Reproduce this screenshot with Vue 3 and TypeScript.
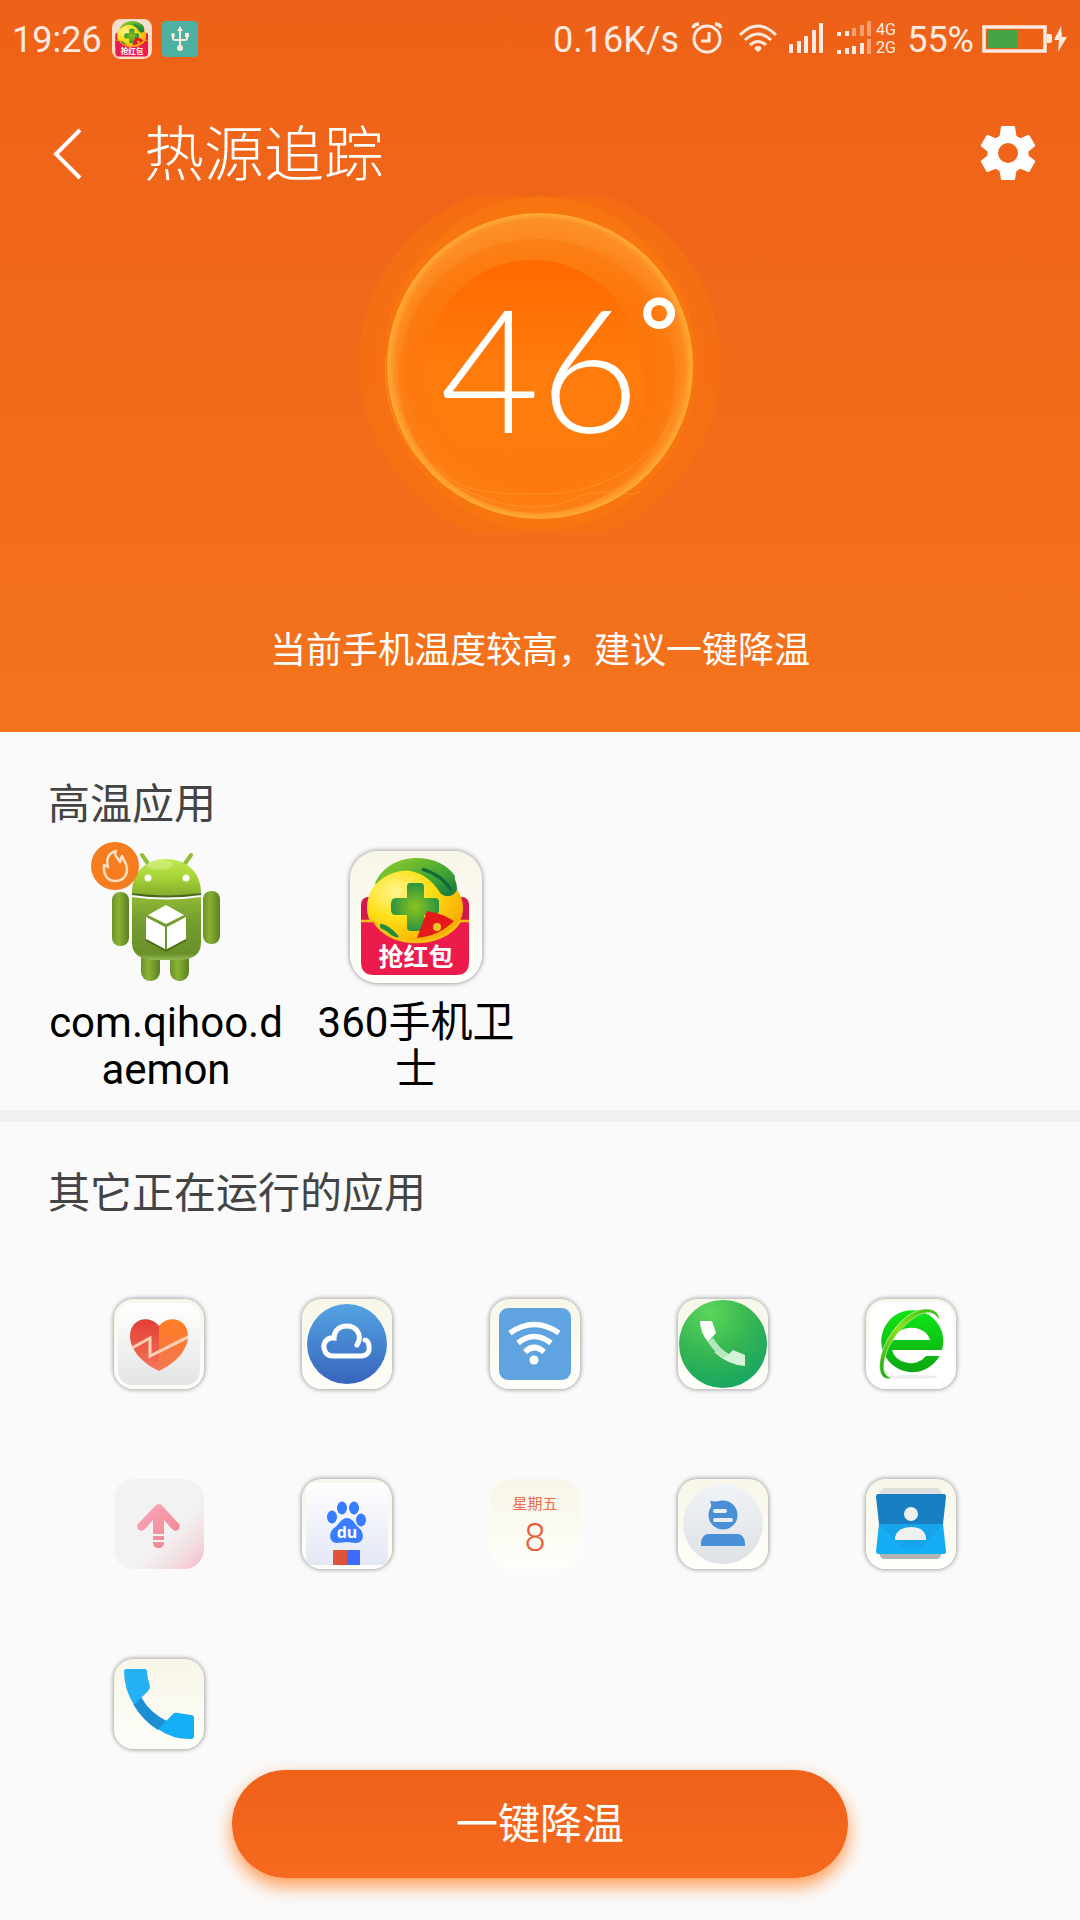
<script setup lang="ts">
import { ref } from 'vue'

interface HotApp {
  id: string
  name: string
  burning: boolean
}

interface SignalBar {
  x: number
  top: number
  dim?: boolean
}

const temperature = ref(46)

const hotApps: HotApp[] = [
  { id: 'android', name: 'com.qihoo.daemon', burning: true },
  { id: 'guard', name: '360手机卫士', burning: false },
]

const runningApps: string[] = [
  'health',
  'cloud',
  'wifi',
  'dialer',
  'browser',
  'boost',
  'baidu',
  'calendar',
  'messaging',
  'contacts',
  'phone',
]

const flatApps = ['boost', 'calendar']

const mainSignal: SignalBar[] = [
  { x: 4, top: 27 },
  { x: 12, top: 24 },
  { x: 19, top: 19 },
  { x: 27, top: 13 },
  { x: 34, top: 6 },
]

const upperSignal: SignalBar[] = [
  { x: 5, top: 15 },
  { x: 13, top: 14 },
  { x: 20, top: 11, dim: true },
  { x: 28, top: 8, dim: true },
  { x: 35, top: 4, dim: true },
]

const lowerSignal: SignalBar[] = [
  { x: 5, top: 33 },
  { x: 13, top: 31 },
  { x: 20, top: 29 },
  { x: 28, top: 26 },
  { x: 35, top: 22, dim: true },
]
</script>

<template>
  <div class="page">
    <header class="hero">
      <div class="status">
        <div class="status-side">
          <span class="clock">19:26</span>
          <svg class="mini" width="40" height="40" viewBox="0 0 132 132">
            <rect width="132" height="132" rx="28" fill="#f6ddc9" />
            <use href="#guard-art" />
          </svg>
          <svg width="36" height="36" viewBox="0 0 36 36">
            <rect width="36" height="36" rx="4" fill="#4cb0a3" />
            <g fill="none" stroke="#fbe9df" stroke-width="2">
              <path d="M18 8v19M11 14v3q0 2 2 2h10q2 0 2-2v-3" />
            </g>
            <path d="M18 5l3 5h-6z" fill="#fbe9df" />
            <circle cx="18" cy="27" r="3" fill="#fbe9df" />
            <circle cx="11" cy="14" r="2" fill="#fbe9df" />
            <rect x="23" y="12" width="4" height="4" fill="#fbe9df" />
          </svg>
        </div>
        <div class="status-side right">
          <span>0.16K/s</span>
          <svg width="42" height="44" viewBox="0 0 42 44" fill="none" stroke="#fdebe1" stroke-width="3">
            <circle cx="20" cy="22" r="13" />
            <path d="M22 15v9h-8" />
            <path d="M6 11q1-4 6-4M34 11q-1-4-6-4" stroke-width="3.4" />
          </svg>
          <svg width="40" height="44" viewBox="0 0 40 44" fill="none" stroke="#fdebe1" stroke-width="3">
            <path d="M3 18q18-18 36 0M8 23q13-12 26 0M13 28q8-7 16 0" />
            <path d="M21 35l-3.500-3q0-3 3.500-3t3.500 3z" fill="#fdebe1" stroke="none" />
          </svg>
          <svg width="39" height="44" viewBox="0 0 39 44" fill="#fdebe1">
            <rect v-for="b in mainSignal" :key="b.x" :x="b.x" :y="b.top" width="4" :height="36 - b.top" />
          </svg>
          <svg width="67" height="44" viewBox="0 0 67 44" fill="#fdebe1">
            <rect v-for="b in upperSignal" :key="b.x" :x="b.x" :y="b.top" width="4" :height="19 - b.top" :opacity="b.dim ? 0.45 : 1" />
            <rect v-for="b in lowerSignal" :key="b.x" :x="b.x" :y="b.top" width="4" :height="37 - b.top" :opacity="b.dim ? 0.45 : 1" />
            <text x="44" y="18" class="net">4G</text>
            <text x="44" y="36" class="net">2G</text>
          </svg>
          <span>55%</span>
          <svg width="86" height="44" viewBox="0 0 86 44">
            <rect x="2" y="10" width="61" height="24" fill="none" stroke="#fdebe1" stroke-width="3.500" />
            <rect x="5" y="13" width="30" height="18" fill="#43a346" />
            <path d="M65 17h3q2 0 2 2v5q0 2-2 2h-3z" fill="#fdebe1" />
            <path d="M79 9l-7 14h5l-1 12 9-15h-5z" fill="#fdebe1" />
          </svg>
        </div>
      </div>

      <div class="titlebar">
        <button class="icon-button" type="button" aria-label="返回">
          <svg width="32" height="56" viewBox="0 0 32 56" fill="none" stroke="#fff" stroke-width="4">
            <path d="M28 5L4 29l24 24" />
          </svg>
        </button>
        <h1>热源追踪</h1>
        <button class="icon-button" type="button" aria-label="设置">
          <svg width="56" height="56" viewBox="0 0 56 56">
            <path
              fill="#fff"
              fill-rule="evenodd"
              d="M22 1h12q1 0 1 1l1.500 9 4 2.300 7.500-3.300q1-.4 1.600.5l5.400 9.500q.5 1-.3 1.600L48.500 26.500v4l6.200 4.900q.8.6.3 1.600l-5.400 9.500q-.6.900-1.600.5L40.500 43.700l-4 2.300L35 54q0 1-1 1H22q-1 0-1-1l-1.500-8-4-2.300L8 47q-1 .4-1.600-.5L1 37q-.5-1 .3-1.600l6.200-4.900v-4L1.300 21.600Q.5 21 1 20l5.400-9.500Q7 9.600 8 10l7.500 3.300 4-2.300L21 2q0-1 1-1zM28 18a10 10 0 1 0 0 20a10 10 0 1 0 0-20z"
            />
          </svg>
        </button>
      </div>

      <svg class="orb" width="364" height="336" viewBox="0 0 364 336">
        <defs>
          <linearGradient id="core" x1="0" y1="0" x2="0" y2="1">
            <stop offset="0" stop-color="#ff6900" />
            <stop offset="0.5" stop-color="#ff7b0b" />
            <stop offset="1" stop-color="#ff8210" stop-opacity="0" />
          </linearGradient>
          <radialGradient id="disc">
            <stop offset="0" stop-color="#ff800e" />
            <stop offset="0.72" stop-color="#fd780b" />
            <stop offset="0.86" stop-color="#fc7e14" />
            <stop offset="0.95" stop-color="#fd8a20" />
            <stop offset="1" stop-color="#ffa936" />
          </radialGradient>
          <radialGradient id="halo">
            <stop offset="0.85" stop-color="#ff8a1c" />
            <stop offset="0.9" stop-color="#fa7a10" stop-opacity="0.6" />
            <stop offset="1" stop-color="#fa7a10" stop-opacity="0" />
          </radialGradient>
          <linearGradient id="shade" x1="0" y1="0" x2="0" y2="1">
            <stop offset="0" stop-color="#fc902a" stop-opacity="0.8" />
            <stop offset="0.3" stop-color="#fc902a" stop-opacity="0" />
          </linearGradient>
        </defs>
        <circle cx="182" cy="168" r="181" fill="#f57012" opacity="0.75" />
        <ellipse cx="182" cy="168" rx="156" ry="167" fill="#f87810" opacity="0.7" />
        <circle cx="182" cy="170" r="166" fill="url(#halo)" opacity="0.5" />
        <circle cx="182" cy="170" r="152" fill="url(#disc)" />
        <circle cx="182" cy="170" r="148" fill="url(#shade)" />
        <ellipse cx="179" cy="180" rx="138" ry="137" fill="#fc760c" opacity="0.5" />
        <ellipse cx="174" cy="192" rx="112" ry="120" fill="#ff8210" opacity="0.3" />
        <circle cx="175" cy="171" r="107" fill="url(#core)" />
        <g fill="none" stroke="#ffa732">
          <circle cx="182" cy="170" r="152" stroke-width="2" />
          <path d="M28 162C25 205 38 250 86 286M78 270C104 302 150 297 190 298C260 296 312 250 325 194" stroke-width="1" opacity="0.5" />
          <path d="M103 292C150 316 190 315 218 302S270 303 282 296" stroke-width="1" opacity="0.5" />
        </g>
        <text x="82" y="237" class="temp">{{ temperature }}</text>
        <text x="282" y="169" class="degree">°</text>
      </svg>
      <p class="advice">当前手机温度较高，建议一键降温</p>
    </header>

    <main>
      <section class="hot">
        <h2>高温应用</h2>
        <ul class="hot-list">
          <li v-for="app in hotApps" :key="app.id" class="hot-item">
            <div class="hot-icon" :class="{ tile: app.id === 'guard', big: app.id === 'guard' }">
              <svg v-if="app.id === 'android'" width="132" height="132" viewBox="0 0 132 132">
                <defs>
                  <linearGradient id="head" x1="0" y1="0" x2="0" y2="1">
                    <stop offset="0" stop-color="#c0ea50" />
                    <stop offset="0.5" stop-color="#a5d336" />
                    <stop offset="1" stop-color="#83ad2c" />
                  </linearGradient>
                  <linearGradient id="torso" x1="0" y1="0" x2="0" y2="1">
                    <stop offset="0" stop-color="#8db934" />
                    <stop offset="0.4" stop-color="#759c2e" />
                    <stop offset="0.9" stop-color="#6a9129" />
                    <stop offset="1" stop-color="#93ba52" />
                  </linearGradient>
                  <linearGradient id="limb" x1="0" y1="0" x2="1" y2="0">
                    <stop offset="0" stop-color="#6d9329" />
                    <stop offset="0.4" stop-color="#89b232" />
                    <stop offset="1" stop-color="#5d7e25" />
                  </linearGradient>
                </defs>
                <path d="M42 4l7 10M91 4l-7 10" stroke="#93bd36" stroke-width="4" stroke-linecap="round" />
                <rect x="41" y="96" width="19" height="34" rx="9" fill="url(#limb)" />
                <rect x="70" y="96" width="19" height="34" rx="9" fill="url(#limb)" />
                <rect x="12" y="41" width="17" height="54" rx="8" fill="url(#limb)" />
                <rect x="103" y="40" width="17" height="53" rx="8" fill="url(#limb)" />
                <path d="M32 42C32 20 47 8 66 8s35 12 35 34q-15 3-35 3t-34-3z" fill="url(#head)" />
                <path d="M32 46q34 5 69 0v46q0 17-24 17H56q-24 0-24-17z" fill="url(#torso)" />
                <path d="M32 43q34 5 69 0" fill="none" stroke="#4c6820" stroke-width="2" />
                <ellipse cx="60" cy="14" rx="13" ry="5" fill="#e6f8a8" opacity="0.4" />
                <circle cx="48" cy="27" r="3.500" fill="#fff" />
                <circle cx="86" cy="27" r="3.500" fill="#fff" />
                <path d="M66 54l18 10-18 9-18-9z" fill="#fff" />
                <path d="M46 66l19 10v22L46 88zM86 66L67 76v22l19-10z" fill="#fff" />
                <path d="M46 89l20 11 20-11" fill="none" stroke="#4c6820" stroke-width="1.500" />
              </svg>
              <svg v-else width="132" height="132" viewBox="0 0 132 132">
                <defs>
                  <radialGradient id="melon" cx="0.3" cy="0.3" r="0.8">
                    <stop offset="0" stop-color="#fff58e" />
                    <stop offset="0.45" stop-color="#fde018" />
                    <stop offset="1" stop-color="#f7a800" />
                  </radialGradient>
                  <linearGradient id="rind" x1="0" y1="0" x2="1" y2="1">
                    <stop offset="0" stop-color="#9ad02a" />
                    <stop offset="0.6" stop-color="#3fa535" />
                    <stop offset="1" stop-color="#17733b" />
                  </linearGradient>
                  <radialGradient id="cross">
                    <stop offset="0" stop-color="#8fc31c" />
                    <stop offset="1" stop-color="#2b9440" />
                  </radialGradient>
                </defs>
                <g id="guard-art">
                  <rect x="11" y="46" width="108" height="50" rx="7" fill="#d4184a" />
                  <path d="M25 32C40 0 88 0 105 25l-4 30H40z" fill="url(#rind)" />
                  <path d="M17 57C17 34 36 19 62 19C92 19 113 36 113 57C113 78 92 92 65 92S17 78 17 57z" fill="url(#melon)" />
                  <path d="M27 28C40 8 60 5 78 10C96 14 108 26 107 39Q101 49 91 43C82 27 66 18 50 19Q36 19 27 28z" fill="url(#rind)" />
                  <path d="M72 18Q92 24 101 39" fill="none" stroke="#11683a" stroke-width="3" />
                  <path d="M30 75q8 1 17 12" fill="none" stroke="#218c3e" stroke-width="5" />
                  <path d="M60 32h11q3 0 3 4v11h11q4 0 4 4v8q0 5-4 5H74v12q0 4-4 4h-9q-4 0-4-4V64H46q-5 0-5-5v-6q0-6 5-6h11V36q0-4 3-4z" fill="url(#cross)" />
                  <path d="M77 60q14 2 27 10-15 15-37 17z" fill="#e31a1a" />
                  <circle cx="87" cy="76" r="4" fill="#efc52a" />
                  <path d="M11 70h13c15 28 69 28 86 0h9v41q0 13-13 13H24q-13 0-13-13z" fill="#eb1c4b" />
                  <path d="M11 70h13c15 28 69 28 86 0h9" fill="none" stroke="#fbbf12" stroke-width="2.500" />
                  <text x="66" y="115" class="packet">抢红包</text>
                </g>
              </svg>
              <span v-if="app.burning" class="badge">
                <svg width="48" height="48" viewBox="0 0 48 48" fill="none" stroke="#ffe0c4" stroke-width="2.500" stroke-linejoin="round">
                  <path d="M25 9c-8 2-10 8-8 16l-4-2c-1 9 3 16 11 16 10 0 15-9 10-19l-3-6-2 6c-2-5-7-6-4-11z" />
                </svg>
              </span>
            </div>
            <span class="hot-name">{{ app.name }}</span>
          </li>
        </ul>
      </section>

      <section class="running">
        <h2>其它正在运行的应用</h2>
        <ul class="grid">
          <li v-for="app in runningApps" :key="app" class="cell">
            <div class="tile" :class="[app, { flat: flatApps.includes(app) }]">
              <svg v-if="app === 'health'" width="90" height="90" viewBox="0 0 90 90">
                <defs>
                  <linearGradient id="paper" x1="0" y1="0" x2="0" y2="1">
                    <stop offset="0" stop-color="#fff" />
                    <stop offset="1" stop-color="#e4e4e4" />
                  </linearGradient>
                  <linearGradient id="heart-l" x1="0" y1="0" x2="0" y2="1">
                    <stop offset="0" stop-color="#e03c34" />
                    <stop offset="1" stop-color="#f5785a" />
                  </linearGradient>
                  <linearGradient id="heart-r" x1="0" y1="0" x2="0" y2="1">
                    <stop offset="0" stop-color="#ff7e22" />
                    <stop offset="1" stop-color="#f57750" />
                  </linearGradient>
                  <clipPath id="heart-clip">
                    <path d="M45 27C36 15 16 19 16 37C16 52 30 65 45 72C60 65 74 52 74 37C74 19 54 15 45 27z" />
                  </clipPath>
                </defs>
                <rect x="4" y="4" width="82" height="82" rx="14" fill="url(#paper)" />
                <g clip-path="url(#heart-clip)">
                  <rect x="15" y="18" width="30" height="56" fill="url(#heart-l)" />
                  <rect x="45" y="18" width="30" height="56" fill="url(#heart-r)" />
                  <path d="M18 49l18-10v18l40-20" fill="none" stroke="#ffd0b4" stroke-width="3" />
                </g>
              </svg>
              <svg v-else-if="app === 'cloud'" width="90" height="90" viewBox="0 0 90 90">
                <defs>
                  <linearGradient id="sky" x1="0" y1="0" x2="0" y2="1">
                    <stop offset="0" stop-color="#54a3e2" />
                    <stop offset="1" stop-color="#3765bd" />
                  </linearGradient>
                </defs>
                <circle cx="45" cy="45" r="40" fill="url(#sky)" />
                <path d="M55 46C62 34 52 27 45 27C36 27 32 33 32 39C25 38 21 44 22 49C23 55 27 57 31 57H59C65 57 68 53 67 47C67 44 65 41 63 41" fill="none" stroke="#fff" stroke-width="5" stroke-linecap="round" />
              </svg>
              <svg v-else-if="app === 'wifi'" width="90" height="90" viewBox="0 0 90 90">
                <rect x="9" y="9" width="72" height="72" rx="9" fill="#5fa3e0" />
                <g fill="none" stroke="#fff" stroke-width="5.500">
                  <path d="M20 34q24-17 49 0M28 44q16-13 33 0M35 53q9-9 19 0" />
                </g>
                <circle cx="44" cy="61" r="4.500" fill="#fff" />
              </svg>
              <svg v-else-if="app === 'dialer'" width="90" height="90" viewBox="0 0 90 90">
                <defs>
                  <radialGradient id="leaf" cx="0.35" cy="0.15" r="0.9">
                    <stop offset="0" stop-color="#5cd65a" />
                    <stop offset="0.5" stop-color="#37b753" />
                    <stop offset="1" stop-color="#17a562" />
                  </radialGradient>
                </defs>
                <circle cx="45" cy="45" r="44" fill="url(#leaf)" />
                <path d="M51 55l4-4 12 5v11Q50 66 36 53z" fill="#d4f3d9" />
                <path d="M30 43l5-4Q42 50 51 55l-6 4Q35 52 30 43z" fill="#b5e8bc" />
                <path d="M22 22h12l4 12-8 9Q22 33 22 22z" fill="#fafffa" />
              </svg>
              <svg v-else-if="app === 'browser'" width="90" height="90" viewBox="0 0 90 90">
                <defs>
                  <linearGradient id="ie" x1="0" y1="0" x2="0" y2="1">
                    <stop offset="0" stop-color="#10e617" />
                    <stop offset="1" stop-color="#0ca812" />
                  </linearGradient>
                  <linearGradient id="ring" x1="0" y1="1" x2="1" y2="0">
                    <stop offset="0" stop-color="#17a812" />
                    <stop offset="0.5" stop-color="#8ee31c" />
                    <stop offset="1" stop-color="#35b914" />
                  </linearGradient>
                </defs>
                <rect x="3" y="3" width="84" height="84" rx="16" fill="#fff" />
                <ellipse cx="46" cy="78" rx="26" ry="2" fill="#eee" />
                <path fill="url(#ie)" fill-rule="evenodd" d="M76 51H26A19 17 0 0 0 60 57H73.500A31 31 0 1 1 76 51zM27 41H64A19 16 0 0 0 27 41z" />
                <path d="M26 79C14 83 11 69 16 53C22 35 36 18 50 12C64 7 74 12 73 21C70 14 63 12 55 15C42 20 24 41 20 55C16 69 17 77 26 79z" fill="url(#ring)" stroke="#fff" stroke-width="0.500" />
              </svg>
              <svg v-else-if="app === 'boost'" width="90" height="90" viewBox="0 0 90 90">
                <defs>
                  <linearGradient id="rose" x1="0" y1="0" x2="0.700" y2="1">
                    <stop offset="0" stop-color="#fbaabe" />
                    <stop offset="1" stop-color="#f08490" />
                  </linearGradient>
                </defs>
                <path d="M44.500 25q2 0 4 2L65 45q2 3-1 6-3 2-6-1l-8-9v14H39V41l-8 9q-3 3-6 1-3-3-1-6l17-18q2-2 3.500-2zM39 57h11v4H39zM39 63h11q0 6-5.500 6T39 63z" fill="url(#rose)" />
              </svg>
              <svg v-else-if="app === 'baidu'" width="90" height="90" viewBox="0 0 90 90">
                <defs>
                  <linearGradient id="mist" x1="0" y1="0" x2="0" y2="1">
                    <stop offset="0" stop-color="#fff" />
                    <stop offset="1" stop-color="#e3e8f5" />
                  </linearGradient>
                </defs>
                <rect x="4" y="4" width="82" height="82" rx="4" fill="url(#mist)" />
                <g fill="#387cff">
                  <ellipse cx="30" cy="38" rx="5" ry="6.500" />
                  <ellipse cx="40" cy="29" rx="5" ry="6.500" />
                  <ellipse cx="52" cy="29" rx="5" ry="6.500" />
                  <ellipse cx="59" cy="41" rx="5" ry="6.500" />
                  <path d="M45 39C51 39 53 46 57 49C63 54 62 64 54 64C50 64 48 63 45 63S39 64 35 64C27 64 26 54 32 49C37 46 39 39 45 39z" />
                </g>
                <text x="45" y="59" class="du">du</text>
                <path d="M31 86V72q0-1 1-1h13v15z" fill="#de543a" />
                <path d="M45 86V71h12q1 0 1 1v14z" fill="#3d6bff" />
              </svg>
              <svg v-else-if="app === 'calendar'" width="90" height="90" viewBox="0 0 90 90">
                <text x="45" y="30" class="weekday">星期五</text>
                <text x="45" y="72" class="day">8</text>
              </svg>
              <svg v-else-if="app === 'messaging'" width="90" height="90" viewBox="0 0 90 90">
                <defs>
                  <linearGradient id="fog" x1="0" y1="0" x2="0" y2="1">
                    <stop offset="0" stop-color="#f1f3f6" />
                    <stop offset="1" stop-color="#dde2e6" />
                  </linearGradient>
                </defs>
                <circle cx="45" cy="45" r="40" fill="url(#fog)" />
                <circle cx="45" cy="36" r="14.500" fill="#4a8fd6" />
                <path d="M32 22q8 1 13-0.500L33 30q1-4-1-8z" fill="#4a8fd6" />
                <path d="M23 67V63q2-8 7-8h30q5 0 7 8v4z" fill="#4a8fd6" />
                <path d="M37 32h10M37 41h16" stroke="#e9eef4" stroke-width="4" stroke-linecap="round" />
              </svg>
              <svg v-else-if="app === 'contacts'" width="90" height="90" viewBox="0 0 90 90">
                <path d="M17 9h55q4 3 4 8H13q0-5 4-8z" fill="#dedede" />
                <path d="M13 72h63q-1 8-5 8H18q-4 0-5-8z" fill="#b3b3b0" />
                <path d="M12 15h66q2 0 2 3l-3 27H13L10 18q0-3 2-3z" fill="#187fc2" />
                <path d="M13 45h64l3 27q0 3-2 3H12q-2 0-2-3z" fill="#14adf4" />
                <path d="M13 45h64L56 68H36z" fill="#1b9fe5" opacity="0.600" />
                <circle cx="45" cy="35" r="7" fill="#f0f0f0" />
                <path d="M29 61v-3q3-10 16-10t15 10v3z" fill="#f0f0f0" />
              </svg>
              <svg v-else width="90" height="90" viewBox="0 0 90 90">
                <path d="M27 38Q36 54 53 62l-9 9Q29 62 19 45z" fill="#1a8fd4" />
                <path d="M12 10h19q2 0 2 2 0 7 3 15 0 3-2 5l-14 14Q10 30 10 12q0-2 2-2z" fill="#25b0f6" />
                <path d="M44 70l15-15q2-2 5-1l13 2q3 0 3 3v18q0 3-3 3Q57 80 44 70z" fill="#14adf6" />
              </svg>
            </div>
          </li>
        </ul>
      </section>
    </main>

    <button class="cool" type="button">一键降温</button>
  </div>
</template>

<style>
body {
  margin: 0;
  background: #fafafa;
}
</style>

<style scoped>
.page {
  display: flex;
  flex-direction: column;
  min-height: 100vh;
  background: #fafafa;
  font-family: Roboto, 'Noto Sans CJK SC', sans-serif;
}

svg {
  display: block;
  flex: none;
}

h1,
h2,
p,
ul {
  margin: 0;
  padding: 0;
}

ul {
  list-style: none;
}

.hero {
  display: flex;
  flex-direction: column;
  align-items: stretch;
  padding-bottom: 55px;
  background: linear-gradient(#ee6118, #f4731c);
  color: #fff;
}

.status {
  display: flex;
  justify-content: space-between;
  height: 78px;
  padding: 0 12px;
  color: #fdebe1;
  font-size: 36px;
  line-height: 44px;
}

.status-side {
  display: flex;
  align-items: center;
  gap: 10px;
}

.status-side span {
  padding-top: 2px;
}

.status-side.right {
  gap: 8px;
}

.net {
  font-family: Roboto, sans-serif;
  font-size: 16px;
}

.titlebar {
  display: flex;
  align-items: center;
  height: 86px;
  margin-top: 32px;
  padding: 0 44px 0 52px;
}

.titlebar h1 {
  flex: 1;
  margin-left: 60px;
  padding-top: 6px;
  font-size: 60px;
  font-weight: 300;
  line-height: 80px;
}

.icon-button {
  padding: 0;
  border: 0;
  background: none;
}

.orb {
  align-self: center;
}

.temp {
  fill: #fff;
  font-family: Lato, sans-serif;
  font-size: 172px;
  font-weight: 300;
}

.degree {
  fill: #fff;
  font-family: Lato, sans-serif;
  font-size: 92px;
  font-weight: 700;
}

.advice {
  margin-top: 93px;
  font-size: 36px;
  line-height: 52px;
  text-align: center;
}

h2 {
  color: #444;
  font-size: 42px;
  font-weight: 400;
  line-height: 60px;
}

.hot {
  padding: 43px 48px 17px;
  border-bottom: 12px solid #f1f1f1;
}

.hot-list {
  display: flex;
  gap: 14px;
  margin-top: 16px;
}

.hot-item {
  display: flex;
  flex-direction: column;
  align-items: center;
  width: 236px;
}

.hot-icon {
  position: relative;
}

.hot-name {
  width: 100%;
  margin-top: 16px;
  color: #000;
  font-size: 42px;
  line-height: 47px;
  text-align: center;
  word-break: break-all;
}

.badge {
  position: absolute;
  top: -9px;
  left: -9px;
  border-radius: 50%;
  background: #f57c1f;
}

.packet {
  fill: #fff;
  font-family: 'Noto Sans CJK SC', sans-serif;
  font-size: 25px;
  font-weight: 700;
  text-anchor: middle;
}

.running {
  padding: 42px 65px 0;
}

.running h2 {
  margin-left: -17px;
}

.grid {
  display: grid;
  grid-template-columns: repeat(5, 1fr);
  row-gap: 90px;
  margin: 75px 10px 0 0;
}

.cell {
  display: flex;
  justify-content: center;
}

.tile {
  overflow: hidden;
  border-radius: 20px;
  background: linear-gradient(#f8f6e8, #fefefa);
  box-shadow: 0 0 4px 1px rgba(0, 0, 0, 0.35);
}

.tile.big {
  border-radius: 28px;
}

.tile.flat {
  box-shadow: none;
}

.tile.boost {
  background: linear-gradient(135deg, #f2f2f2 60%, #f2dfe2 80%, #f7b8c6);
}

.du {
  fill: #fff;
  font-family: 'Noto Sans', sans-serif;
  font-size: 16px;
  font-weight: 700;
  text-anchor: middle;
}

.weekday {
  fill: #ee6a4c;
  font-family: 'Noto Sans CJK SC', sans-serif;
  font-size: 15px;
  text-anchor: middle;
}

.day {
  fill: #ee5a3a;
  font-family: Roboto, sans-serif;
  font-size: 38px;
  font-weight: 300;
  text-anchor: middle;
}

.cool {
  align-self: center;
  width: 57%;
  height: 108px;
  margin: 21px 0 42px;
  padding: 2px 0 0;
  border: 0;
  border-radius: 54px;
  background: linear-gradient(#ee6118, #f6691f);
  box-shadow: 0 8px 18px rgba(255, 122, 24, 0.75);
  color: #fff;
  font-family: inherit;
  font-size: 42px;
  line-height: 60px;
}
</style>
